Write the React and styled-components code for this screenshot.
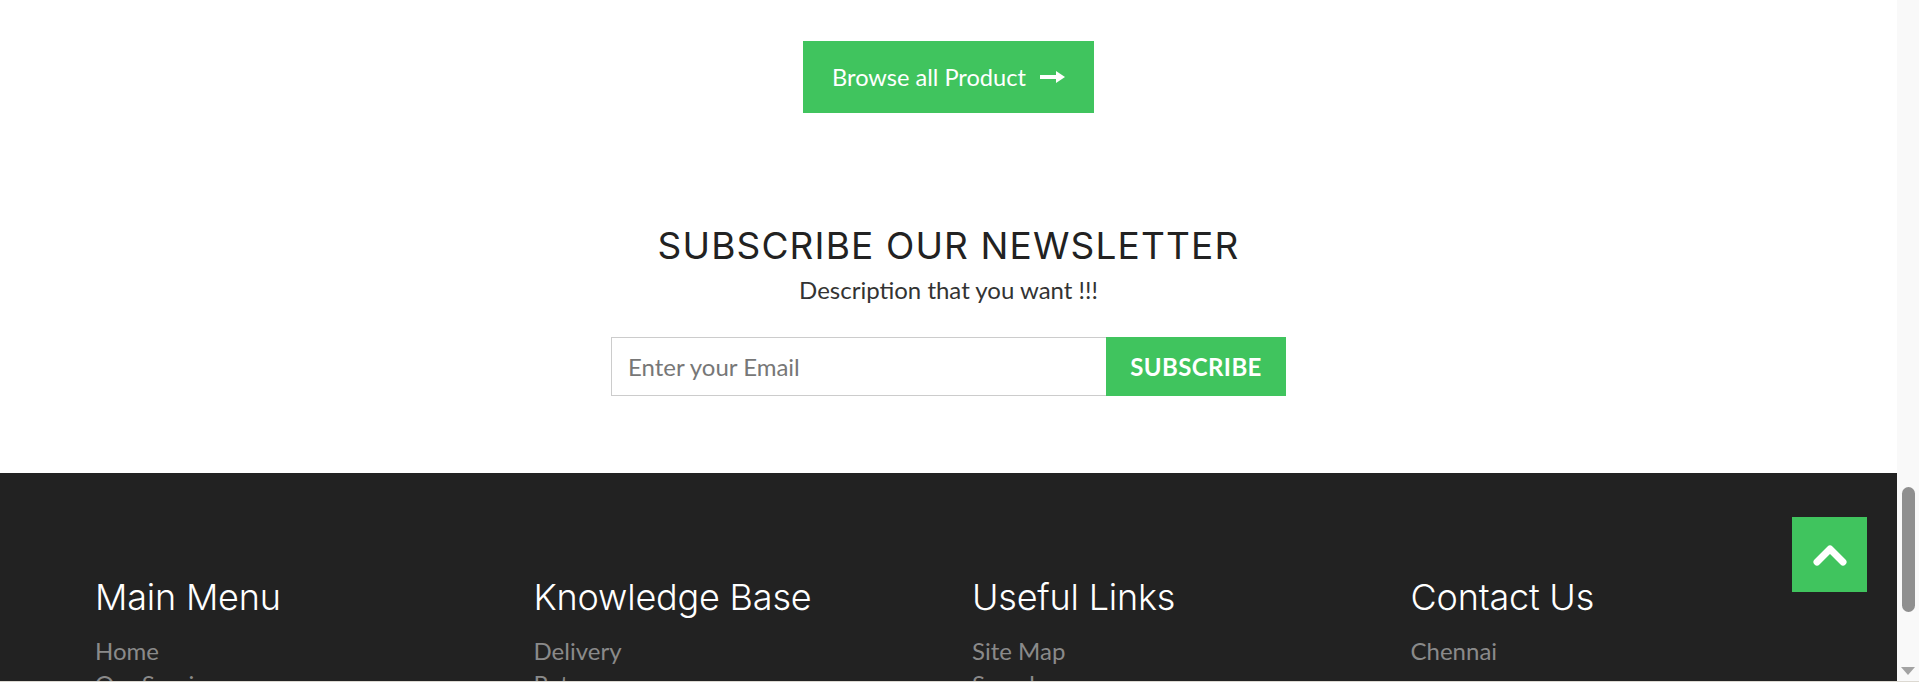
import React from "react";
import styled, { createGlobalStyle } from "styled-components";

const GlobalStyle = createGlobalStyle`
  html, body { margin: 0; padding: 0; background: #ffffff; overflow: hidden; }
  * { box-sizing: border-box; }
`;

const Frame = styled.div`
  display: flex;
  height: 682px;
  border-bottom: 1px solid #dcd9d2;
  overflow: hidden;
`;

const Main = styled.main`
  flex: 1;
  display: flex;
  flex-direction: column;
  min-width: 0;
  overflow: hidden;
  position: relative;
  font-family: Lato, "Liberation Sans", sans-serif;
`;

const ProductSection = styled.section`
  flex-shrink: 0;
  display: flex;
  justify-content: center;
  padding-top: 41px;
`;

const BrowseButton = styled.a`
  display: inline-flex;
  align-items: center;
  gap: 14px;
  height: 72px;
  padding: 0 29px;
  background: #40c45e;
  color: #ffffff;
  font-size: 23.6px;
  text-decoration: none;
`;

const Newsletter = styled.section`
  flex-shrink: 0;
  display: flex;
  flex-direction: column;
  align-items: center;
  padding-top: 111px;
  height: 360px;
`;

const Title = styled.h2`
  margin: 0;
  font-family: Inter, "Noto Sans", sans-serif;
  font-weight: 400;
  font-size: 37px;
  line-height: 44px;
  color: #222222;
  letter-spacing: 1.15px;
`;

const Description = styled.p`
  margin: 8px 0 0;
  font-size: 24px;
  line-height: 28px;
  color: #333333;
`;

const Form = styled.form`
  display: flex;
  margin-top: 33px;
  height: 59px;
`;

const EmailInput = styled.input`
  width: 495px;
  height: 59px;
  border: 1px solid #cccccc;
  border-right: none;
  padding: 0 16px;
  font-family: Lato, "Liberation Sans", sans-serif;
  font-size: 24px;
  color: #555555;
  outline: none;
  &::placeholder { color: #777777; }
`;

const SubscribeButton = styled.button`
  width: 180px;
  height: 59px;
  border: none;
  background: #40c45e;
  color: #ffffff;
  font-family: Lato, "Liberation Sans", sans-serif;
  font-weight: 700;
  font-size: 24px;
  letter-spacing: 0.4px;
  padding: 0;
`;

const Footer = styled.footer`
  flex: 1 0 auto;
  background: #222222;
  padding: 102px 0 0 95px;
`;

const Columns = styled.div`
  display: grid;
  grid-template-columns: repeat(4, 438.5px);
`;

const Column = styled.div`
  display: flex;
  flex-direction: column;
`;

const ColumnTitle = styled.h3`
  margin: 0 0 15px;
  font-family: Inter, "Noto Sans", sans-serif;
  font-weight: 300;
  font-size: 36px;
  line-height: 44px;
  color: #ffffff;
  letter-spacing: -0.2px;
`;

const LinkItem = styled.a`
  font-size: 24px;
  line-height: 33px;
  color: #8a8a8a;
  text-decoration: none;
`;

const BackToTop = styled.button`
  position: absolute;
  right: 30px;
  top: 517px;
  width: 75px;
  height: 75px;
  border: none;
  background: #40c45e;
  display: flex;
  align-items: center;
  justify-content: center;
  padding: 0;
`;

const ScrollRail = styled.div`
  width: 22px;
  background: #f9f9f9;
  display: flex;
  flex-direction: column;
  align-items: center;
`;

const Thumb = styled.div`
  margin-top: 487px;
  width: 13px;
  height: 125px;
  border-radius: 7px;
  background: #8f8f8f;
`;

const DownArrow = styled.div`
  margin-top: auto;
  margin-bottom: 6px;
  width: 0;
  height: 0;
  border-left: 7px solid transparent;
  border-right: 7px solid transparent;
  border-top: 8px solid #a3a3a3;
`;

const ArrowRight = () => (
  <svg width="25" height="12" viewBox="0 0 25 12" aria-hidden="true">
    <rect x="0" y="4" width="18" height="4" fill="#fff" />
    <path d="M16 0 L25 6 L16 12 Z" fill="#fff" />
  </svg>
);

const ChevronUp = () => (
  <svg width="34" height="22" viewBox="0 0 34 22" aria-hidden="true">
    <path d="M4 18 L17 5 L30 18" fill="none" stroke="#fff" strokeWidth="7" strokeLinecap="round" strokeLinejoin="round" />
  </svg>
);

const columns = [
  { title: "Main Menu", links: ["Home", "Our Services"] },
  { title: "Knowledge Base", links: ["Delivery", "Returns"] },
  { title: "Useful Links", links: ["Site Map", "Search"] },
  { title: "Contact Us", links: ["Chennai"] },
];

export default function App() {
  return (
    <>
      <GlobalStyle />
      <Frame>
        <Main>
          <ProductSection>
            <BrowseButton href="#">
              Browse all Product
              <ArrowRight />
            </BrowseButton>
          </ProductSection>
          <Newsletter>
            <Title>SUBSCRIBE OUR NEWSLETTER</Title>
            <Description>Description that you want !!!</Description>
            <Form onSubmit={(e) => e.preventDefault()}>
              <EmailInput type="email" placeholder="Enter your Email" />
              <SubscribeButton type="submit">SUBSCRIBE</SubscribeButton>
            </Form>
          </Newsletter>
          <Footer>
            <Columns>
              {columns.map((c) => (
                <Column key={c.title}>
                  <ColumnTitle>{c.title}</ColumnTitle>
                  {c.links.map((l) => (
                    <LinkItem key={l} href="#">{l}</LinkItem>
                  ))}
                </Column>
              ))}
            </Columns>
          </Footer>
          <BackToTop aria-label="Back to top">
            <ChevronUp />
          </BackToTop>
        </Main>
        <ScrollRail>
          <Thumb />
          <DownArrow />
        </ScrollRail>
      </Frame>
    </>
  );
}
